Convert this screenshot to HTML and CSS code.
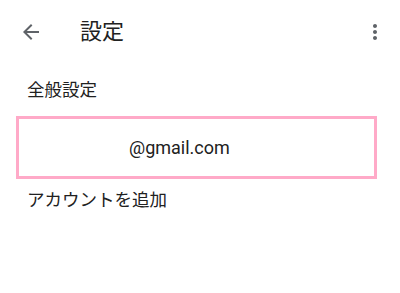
FILE: index.html
```html
<!DOCTYPE html>
<html lang="ja">
<head>
<meta charset="utf-8">
<link rel="stylesheet" href="styles.css">
</head>
<body>
<div class="app">
  <header class="toolbar">
    <svg class="icon" width="24" height="24" viewBox="0 0 24 24"><path fill="#5f6368" d="M20 11H7.83l5.59-5.59L12 4l-8 8 8 8 1.41-1.41L7.83 13H20v-2z"/></svg>
    <h1 class="title">設定</h1>
    <svg class="icon menu" width="24" height="24" viewBox="0 0 24 24"><path fill="#5f6368" d="M12 8c1.1 0 2-.9 2-2s-.9-2-2-2-2 .9-2 2 .9 2 2 2zm0 2c-1.1 0-2 .9-2 2s.9 2 2 2 2-.9 2-2-.9-2-2-2zm0 6c-1.1 0-2 .9-2 2s.9 2 2 2 2-.9 2-2-.9-2-2-2z"/></svg>
  </header>
  <div class="row general">全般設定</div>
  <div class="account">@gmail.com</div>
  <div class="row add">アカウントを追加</div>
</div>
</body>
</html>
```
FILE: styles.css
```css
html, body {
  margin: 0;
  padding: 0;
  background: #fff;
}
body {
  font-family: Roboto, "Noto Sans CJK JP", sans-serif;
  color: #212121;
}
.app {
  width: 400px;
}
.toolbar {
  height: 64px;
  display: flex;
  align-items: center;
  padding: 0 13px 0 19px;
  box-sizing: border-box;
}
.icon {
  flex: none;
  display: block;
}
.title {
  margin: 0 0 0 37px;
  font-size: 22px;
  font-weight: 400;
  flex: 1;
  line-height: 1;
}
.row {
  display: flex;
  align-items: center;
  padding-left: 27px;
  font-size: 17.5px;
  box-sizing: border-box;
}
.general {
  height: 52px;
  padding-bottom: 4px;
}
.account {
  margin: 0 23px 0 16px;
  height: 63px;
  box-sizing: border-box;
  border: 3px solid #ffaac8;
  display: flex;
  align-items: center;
  padding-left: 110px;
  font-size: 18px;
}
.add {
  height: 39px;
}
```
